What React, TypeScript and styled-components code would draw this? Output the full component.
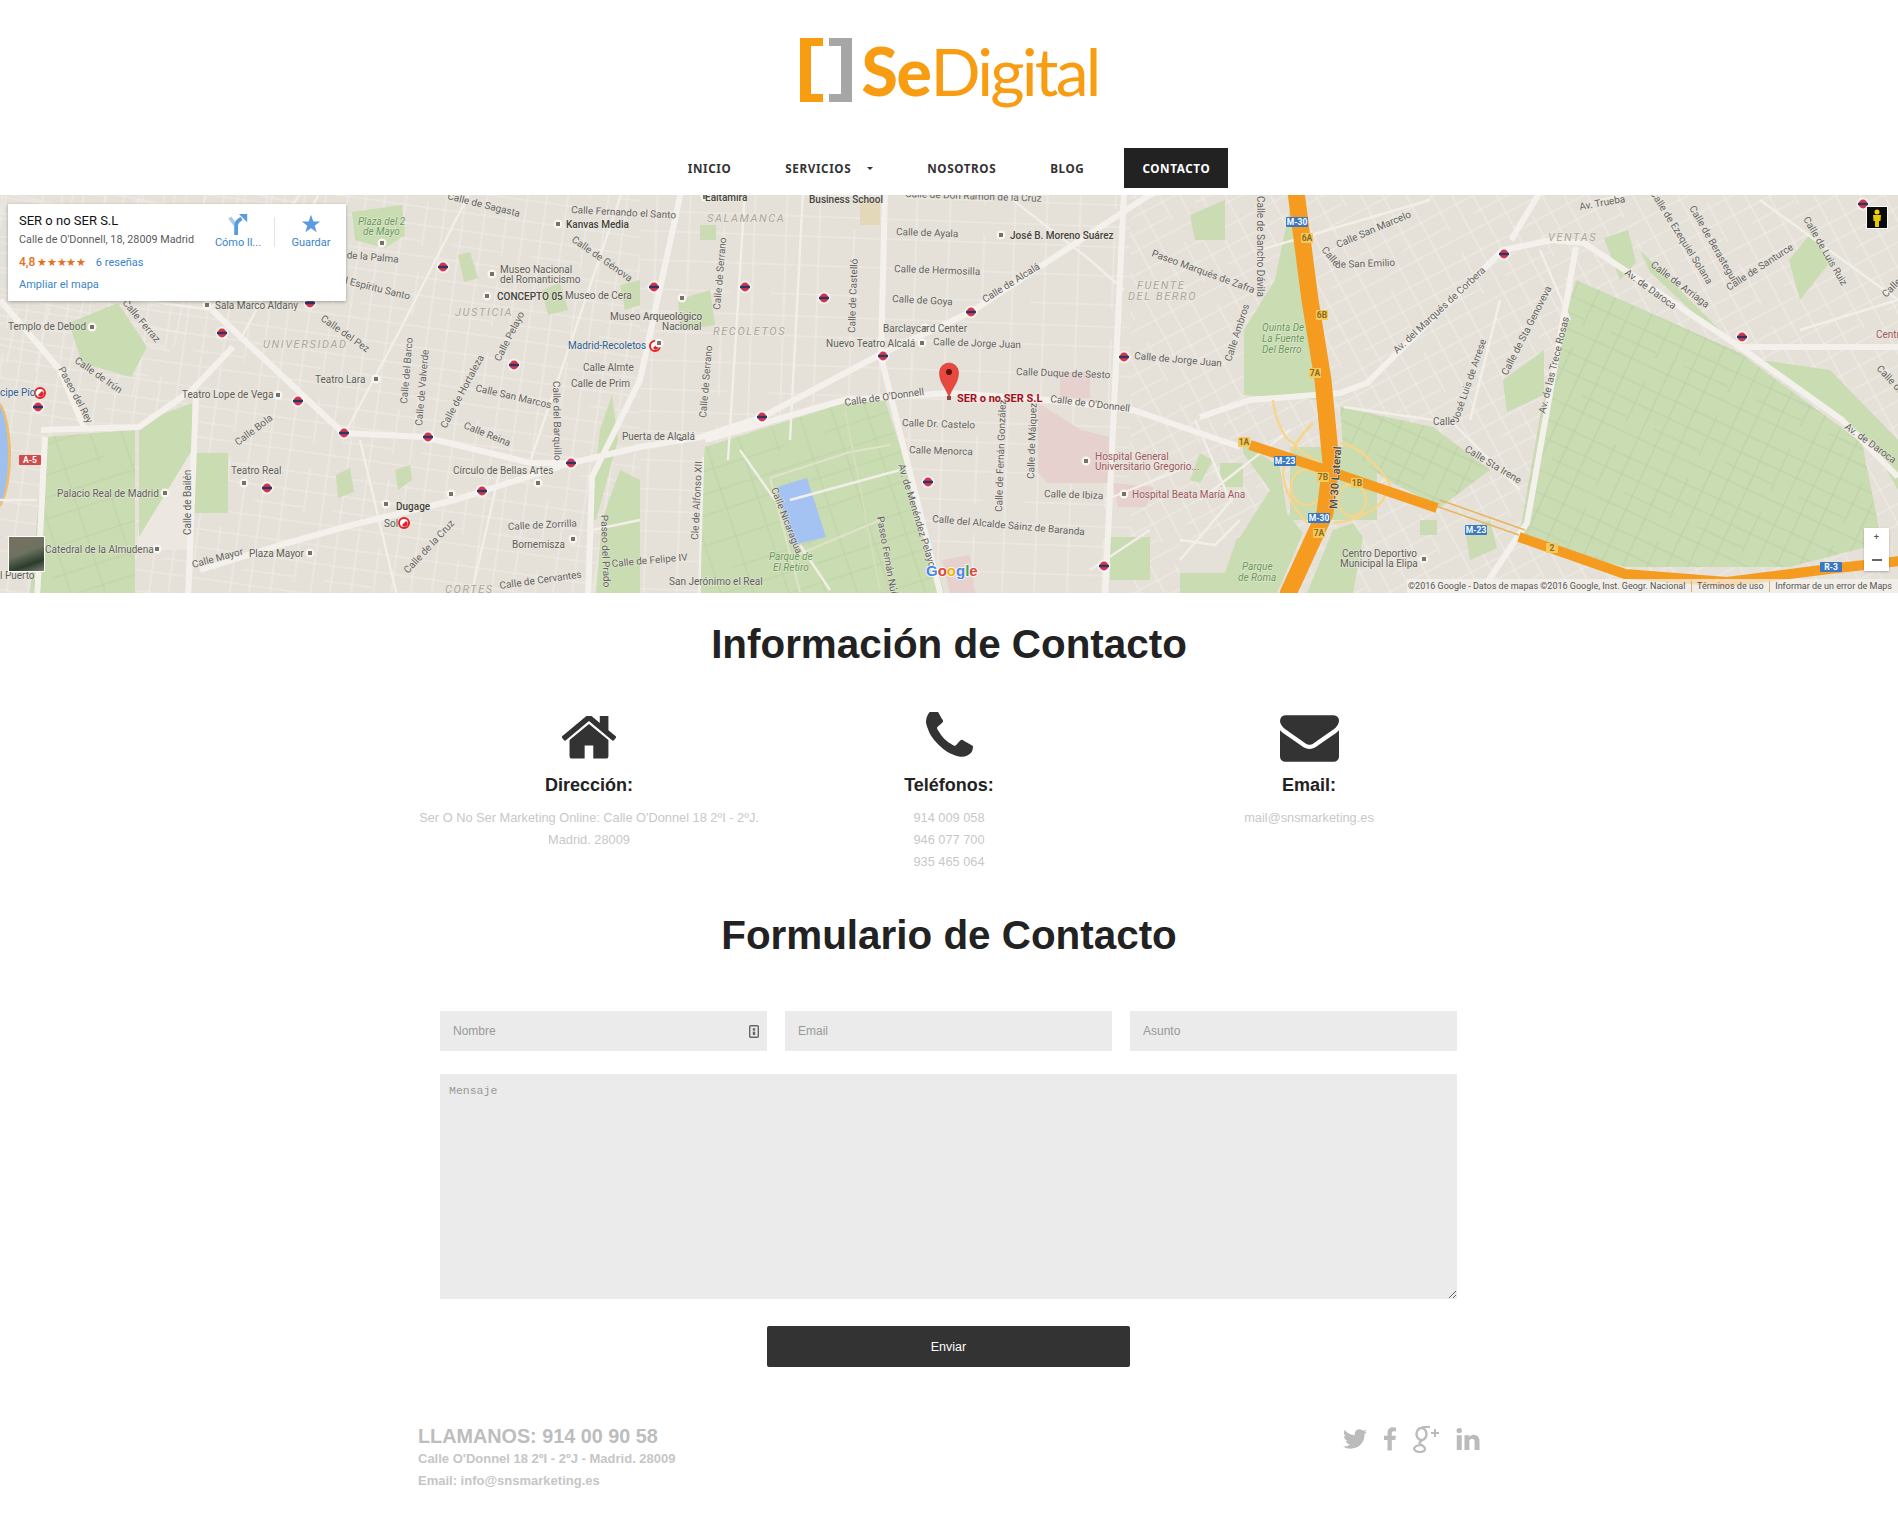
import React from "react";
import styled, { createGlobalStyle } from "styled-components";

const Global = createGlobalStyle`
  html, body { margin: 0; padding: 0; background: #fff; }
  body { font-family: "Liberation Sans", Arial, sans-serif; color: #222; }
  * { box-sizing: border-box; }
`;

const Page = styled.div`
  width: 1898px;
  height: 1517px;
  overflow: hidden;
`;

const Header = styled.header`
  height: 195px;
  padding-top: 37px;
  display: flex;
  flex-direction: column;
  align-items: center;
`;

const Logo = styled.div`
  height: 74px;
  display: flex;
  align-items: flex-start;
  gap: 10px;
`;

const LogoWord = styled.div`
  font-family: "Lato", sans-serif;
  font-size: 66px;
  line-height: 68px;
  color: #f89c12;
  letter-spacing: -2.8px;
  white-space: nowrap;
  b { font-weight: 900; letter-spacing: -1.4px; }
`;

const Nav = styled.nav`
  margin-top: 37px;
  height: 40px;
  display: flex;
  align-items: stretch;
  gap: 18px;
`;

const NavItem = styled.a<{ $active?: boolean }>`
  display: flex;
  align-items: center;
  gap: 16px;
  padding: 0 18px;
  margin-left: ${(p) => (p.$active ? "4px" : "0")};
  font-family: "Noto Sans", sans-serif;
  font-size: 11.7px;
  font-weight: 700;
  letter-spacing: 0.6px;
  color: ${(p) => (p.$active ? "#fff" : "#333")};
  background: ${(p) => (p.$active ? "#222" : "transparent")};
`;

const Caret = styled.span`
  width: 0;
  height: 0;
  border-left: 3px solid transparent;
  border-right: 3px solid transparent;
  border-top: 3px solid #333;
`;

const MapFrame = styled.section`
  position: relative;
  height: 398px;
  overflow: hidden;
  background: #e5e0d8;
`;

const MapSvg = styled.svg`
  display: block;
  width: 1898px;
  height: 398px;
`;

const MapText = styled.text<{ $k: string }>`
  font-family: Roboto, sans-serif;
  font-size: ${(p) => (p.$k === "pin" || p.$k === "area" || p.$k === "big" ? "11px" : "10px")};
  font-weight: ${(p) => (p.$k === "pin" ? 700 : p.$k === "bold" || p.$k === "big" ? 500 : 400)};
  font-style: ${(p) => (p.$k === "area" || p.$k === "park" ? "italic" : "normal")};
  letter-spacing: ${(p) => (p.$k === "area" ? "1.6px" : "0")};
  fill: ${(p) =>
    ({ st: "#63635f", poi: "#605f5b", bold: "#454440", big: "#4c4b47", area: "#aca69b", park: "#659a55", blue: "#2f5f96", pink: "#9c5a62", pin: "#a3101c" } as Record<string, string>)[p.$k]};
  paint-order: stroke;
  stroke: rgba(240, 236, 228, 0.6);
  stroke-width: 1.4px;
`;

const ShieldText = styled.text`
  font-family: Roboto, sans-serif;
  font-size: 8.5px;
  font-weight: 700;
  text-anchor: middle;
`;

const GoogleMark = styled.text`
  font-family: "Liberation Sans", sans-serif;
  font-size: 15px;
  font-weight: 700;
  paint-order: stroke;
  stroke: rgba(255, 255, 255, 0.7);
  stroke-width: 2px;
`;

const InfoCard = styled.div`
  position: absolute;
  left: 8px;
  top: 9px;
  width: 338px;
  height: 97px;
  padding: 9px 11px;
  background: #fff;
  box-shadow: 0 1px 3px rgba(0, 0, 0, 0.3);
  font-family: Roboto, sans-serif;
  display: flex;
  justify-content: space-between;
`;

const CardInfo = styled.div`
  display: flex;
  flex-direction: column;
`;

const CardTitle = styled.div`
  font-size: 13px;
  line-height: 16px;
  font-weight: 400;
  color: #111;
`;

const CardAddress = styled.div`
  margin-top: 3px;
  font-size: 10.8px;
  line-height: 15px;
  color: #5b5b5b;
`;

const RatingRow = styled.div`
  margin-top: 8px;
  height: 17px;
  display: flex;
  align-items: center;
  font-size: 12px;
  color: #e7711b;
  font-weight: 500;
`;

const Stars = styled.span`
  margin-left: 2px;
  font-size: 11px;
  letter-spacing: -0.3px;
`;

const BlueLink = styled.a`
  font-size: 11px;
  color: #3a84c9;
  font-weight: 400;
`;

const ReviewLink = styled(BlueLink)`
  margin-left: 10px;
`;

const MapLink = styled(BlueLink)`
  margin-top: 9px;
  line-height: 14px;
`;

const CardActions = styled.div`
  display: flex;
  align-items: flex-start;
  margin-right: -4px;
`;

const CardAction = styled.div`
  width: 56px;
  display: flex;
  flex-direction: column;
  align-items: center;
  font-size: 11px;
  color: #3a84c9;
  gap: 1px;
`;

const CardDivider = styled.div`
  width: 1px;
  height: 30px;
  margin: 4px 8px 0;
  background: #e4e4e4;
`;

const Pegman = styled.div`
  position: absolute;
  left: 1866px;
  top: 11px;
  width: 22px;
  height: 23px;
  background: #0b0b0b;
  border: 1px solid #fff;
  display: flex;
  align-items: center;
  justify-content: center;
`;

const Thumb = styled.div`
  position: absolute;
  left: 8px;
  top: 341px;
  width: 37px;
  height: 36px;
  border: 1px solid #fff;
  background: linear-gradient(160deg, #77705f 0%, #6e7261 45%, #2b3c2b 75%, #7c7d70 100%);
`;

const ZoomControl = styled.div`
  position: absolute;
  left: 1864px;
  top: 333px;
  width: 25px;
  height: 43px;
  background: #fff;
  box-shadow: 0 1px 2px rgba(0, 0, 0, 0.25);
  display: flex;
  flex-direction: column;
  align-items: center;
  justify-content: space-between;
  padding: 5px 0 10px;
  color: #555;
  font-family: "Liberation Sans", sans-serif;
  font-weight: 700;
`;

const ZoomPlus = styled.span`
  font-size: 9px;
  line-height: 9px;
`;

const ZoomMinus = styled.span`
  width: 10px;
  height: 2px;
  background: #666;
`;

const Attribution = styled.div`
  position: absolute;
  right: 0;
  bottom: 0;
  width: 491px;
  height: 14px;
  padding: 0 6px 0 1px;
  background: rgba(245, 243, 238, 0.72);
  display: flex;
  align-items: center;
  justify-content: space-between;
  font-family: Roboto, sans-serif;
  font-size: 9px;
  color: #555;
  white-space: nowrap;
`;

const AttributionSep = styled.span`
  width: 1px;
  height: 11px;
  background: #d8b070;
`;

const Content = styled.main`
  display: flex;
  flex-direction: column;
  align-items: center;
`;

const Heading = styled.h2<{ $top: number }>`
  margin: ${(p) => p.$top}px 0 0;
  font-size: 40.4px;
  line-height: 48px;
  font-weight: 700;
  color: #222;
  text-align: center;
`;

const InfoGrid = styled.div`
  margin-top: 38px;
  width: 1080px;
  height: 205px;
  display: grid;
  grid-template-columns: repeat(3, 360px);
`;

const InfoCol = styled.div`
  padding: 0 10px;
  text-align: center;
`;

const IconSlot = styled.div`
  height: 53px;
  display: flex;
  align-items: flex-end;
  justify-content: center;
  color: #333;
`;

const EnvelopeIcon = styled.svg`
  margin-bottom: -3px;
`;

const InfoTitle = styled.h4`
  margin: 14px 0 10px;
  font-size: 18px;
  line-height: 24px;
  font-weight: 700;
  color: #222;
`;

const InfoText = styled.p`
  margin: 0;
  font-size: 12.8px;
  line-height: 22px;
  color: #c8c8c8;
`;

const Form = styled.form`
  margin-top: 52px;
  margin-right: 1px;
  width: 1017px;
  display: flex;
  flex-direction: column;
  align-items: center;
`;

const FieldRow = styled.div`
  width: 100%;
  display: grid;
  grid-template-columns: repeat(3, 327px);
  column-gap: 18px;
`;

const FieldWrap = styled.div`
  position: relative;
`;

const Field = styled.input`
  display: block;
  width: 100%;
  height: 40px;
  padding: 0 13px;
  border: 0;
  border-radius: 0;
  background: #ebebeb;
  font-family: "Liberation Sans", sans-serif;
  font-size: 12px;
  outline: 0;
  &::placeholder { color: #999; opacity: 1; }
`;

const FieldBadge = styled.svg`
  position: absolute;
  right: 8px;
  top: 14px;
`;

const Message = styled.textarea`
  display: block;
  margin-top: 23px;
  width: 100%;
  height: 225px;
  padding: 10px 9px;
  border: 0;
  border-radius: 0;
  background: #ebebeb;
  font-family: "Liberation Mono", monospace;
  font-size: 11.5px;
  outline: 0;
  &::placeholder { color: #999; opacity: 1; }
`;

const Submit = styled.button`
  margin-top: 27px;
  width: 363px;
  height: 41px;
  border: 0;
  border-radius: 2px;
  background: #333;
  color: #fff;
  font-family: "Liberation Sans", sans-serif;
  font-size: 12.5px;
`;

const Footer = styled.footer`
  margin-top: 58px;
  width: 1062px;
  display: flex;
  justify-content: space-between;
  align-items: flex-start;
`;

const FooterLead = styled.div`
  font-size: 19.8px;
  line-height: 23px;
  font-weight: 700;
  color: #bdbdbd;
`;

const FooterLine = styled.div`
  font-size: 13px;
  line-height: 22px;
  font-weight: 700;
  color: #c6c6c6;
`;

const Social = styled.div`
  display: flex;
  align-items: center;
  height: 28px;
  gap: 17px;
  color: #bbb;
`;

type L = [string, number, number, number, string];
const labels: L[] = [
  ["Plaza del 2", 358, 225, 0, "park"], ["de Mayo", 363, 235, 0, "park"],
  ["Calle de Sagasta", 447, 199, 14, "st"], ["Calle Fernando el Santo", 571, 213, 3, "st"],
  ["Kanvas Media", 566, 228, 0, "bold"], ["Calle de Génova", 571, 241, 35, "st"],
  ["Calle de la Palma", 322, 256, 5, "st"], ["Calle del Espíritu Santo", 310, 275, 14, "st"],
  ["Museo Nacional", 500, 273, 0, "poi"], ["del Romanticismo", 500, 283, 0, "poi"],
  ["CONCEPTO 05", 497, 300, 0, "bold"], ["Museo de Cera", 565, 299, 0, "poi"],
  ["Museo Arqueológico", 610, 320, 0, "poi"], ["JUSTICIA", 455, 316, 0, "area"],
  ["UNIVERSIDAD", 263, 348, 0, "area"], ["Sala Marco Aldany", 215, 309, 0, "poi"],
  ["Templo de Debod", 8, 330, 0, "poi"], ["Calle del Pez", 320, 320, 35, "st"],
  ["Calle de Irún", 74, 362, 35, "st"], ["Paseo del Rey", 58, 369, 62, "st"],
  ["Calle Ferraz", 122, 303, 50, "st"], ["Teatro Lara", 315, 383, 0, "poi"],
  ["Teatro Lope de Vega", 182, 398, 0, "poi"], ["Calle del Barco", 407, 404, -85, "st"],
  ["Calle de Valverde", 422, 426, -85, "st"], ["Calle de Hortaleza", 446, 429, -62, "st"],
  ["Calle Pelayo", 500, 362, -63, "st"], ["Calle San Marcos", 475, 391, 13, "st"],
  ["Calle Reina", 463, 428, 22, "st"], ["Calle del Barquillo", 553, 381, 89, "st"],
  ["Calle Almte", 583, 371, 0, "st"], ["Calle de Prim", 571, 387, 0, "st"],
  ["Madrid-Recoletos", 568, 349, 0, "blue"], ["Calle Bola", 238, 446, -37, "st"],
  ["cipe Pío", 0, 396, 0, "blue"], ["Teatro Real", 231, 474, 0, "poi"],
  ["Palacio Real de Madrid", 57, 497, 0, "poi"], ["Círculo de Bellas Artes", 453, 474, 0, "poi"],
  ["Dugage", 396, 510, 0, "bold"], ["Sol", 384, 527, 0, "poi"],
  ["Calle de Zorrilla", 508, 530, -3, "st"], ["Bornemisza", 512, 548, 0, "poi"],
  ["Calle de Bailén", 191, 535, -90, "st"], ["Catedral de la Almudena", 45, 553, 0, "poi"],
  ["Calle Mayor", 193, 568, -15, "st"], ["Plaza Mayor", 249, 557, 0, "poi"],
  ["Calle de la Cruz", 408, 574, -47, "st"], ["Calle de Cervantes", 500, 589, -8, "st"],
  ["CORTES", 445, 593, 0, "area"], ["Paseo del Prado", 601, 515, 88, "st"],
  ["l Puerto", 0, 579, 0, "poi"],
  ["Ealtamira", 705, 201, 0, "bold"], ["Business School", 809, 203, 0, "bold"],
  ["Calle de Don Ramón de la Cruz", 905, 197, 2, "st"], ["SALAMANCA", 707, 222, 0, "area"],
  ["Calle de Ayala", 896, 235, 2, "st"], ["José B. Moreno Suárez", 1010, 239, 0, "bold"],
  ["Calle de Serrano", 720, 310, -85, "st"], ["Calle de Castelló", 855, 333, -88, "st"],
  ["Calle de Hermosilla", 894, 272, 2, "st"], ["Calle de Goya", 892, 302, 3, "st"],
  ["Calle de Alcalá", 985, 303, -32, "st"], ["Paseo Marqués de Zafra", 1151, 256, 20, "st"],
  ["FUENTE", 1137, 289, 0, "area"], ["DEL BERRO", 1128, 300, 0, "area"],
  ["Calle Ambros", 1231, 362, -72, "st"], ["Calle de Sancho Dávila", 1257, 196, 90, "st"],
  ["Arqueológico", 643, 320, 0, "poi"], ["Nacional", 662, 330, 0, "poi"],
  ["RECOLETOS", 713, 335, 0, "area"], ["Barclaycard Center", 883, 332, 0, "poi"],
  ["Nuevo Teatro Alcalá", 826, 347, 0, "poi"], ["Calle de Jorge Juan", 933, 345, 2, "st"],
  ["Calle de Jorge Juan", 1134, 359, 5, "st"], ["Calle Duque de Sesto", 1016, 375, 2, "st"],
  ["Calle de O'Donnell", 845, 406, -8, "st"], ["Calle de O'Donnell", 1050, 402, 7, "st"],
  ["SER o no SER S.L", 957, 402, 0, "pin"], ["Calle Dr. Castelo", 902, 426, 2, "st"],
  ["Calle Menorca", 909, 453, 2, "st"], ["Calle de Serrano", 706, 418, -85, "st"],
  ["Puerta de Alcalá", 622, 440, 0, "poi"], ["Calle de Fernán González", 1002, 512, -88, "st"],
  ["Calle de Máiquez", 1034, 479, -88, "st"], ["Hospital General", 1095, 460, 0, "pink"],
  ["Universitario Gregorio...", 1095, 470, 0, "pink"], ["Calle de Ibiza", 1044, 497, 2, "st"],
  ["Hospital Beata María Ana", 1132, 498, 0, "pink"], ["Calle del Alcalde Sáinz de Baranda", 932, 522, 5, "st"],
  ["Av. de Menéndez Pelayo", 898, 465, 73, "st"], ["Paseo Fernán Núñez", 877, 517, 80, "st"],
  ["Calle Nicaragua", 771, 489, 69, "st"], ["Cle de Alfonso XII", 698, 540, -87, "st"],
  ["Parque de", 769, 560, 0, "park"], ["El Retiro", 773, 571, 0, "park"],
  ["Calle de Felipe IV", 612, 567, -5, "st"], ["San Jerónimo el Real", 669, 585, 0, "poi"],
  ["Parque", 1242, 570, 0, "park"], ["de Roma", 1238, 581, 0, "park"],
  ["Calle San Marcelo", 1338, 248, -23, "st"], ["Calle", 1321, 250, 50, "st"],
  ["de San Emilio", 1335, 268, -2, "st"], ["Av. Trueba", 1580, 210, -10, "st"],
  ["VENTAS", 1548, 241, 0, "area"], ["Av. del Marqués de Corbera", 1397, 354, -43, "st"],
  ["Calle de Sta Genoveva", 1507, 376, -63, "st"], ["Av. de las Trece Rosas", 1545, 414, -76, "st"],
  ["Calle", 1433, 425, 0, "st"], ["José Luis de Arrese", 1458, 423, -71, "st"],
  ["Calle Sta Irene", 1464, 451, 31, "st"], ["Av. de Daroca", 1624, 274, 36, "st"],
  ["Calle de Arriaga", 1650, 266, 37, "st"], ["Calle de Ezequiel Solana", 1650, 193, 58, "st"],
  ["Calle de Berastegui", 1689, 208, 60, "st"], ["Calle de Santurce", 1729, 291, -33, "st"],
  ["Calle de Luis Ruiz", 1803, 219, 60, "st"], ["Av. de Daroca", 1844, 428, 36, "st"],
  ["Calle de", 1876, 369, 47, "st"], ["Calle", 1886, 298, -45, "st"], ["Centro", 1876, 338, 0, "pink"],
  ["Quinta De", 1262, 331, 0, "park"], ["La Fuente", 1262, 342, 0, "park"], ["Del Berro", 1262, 353, 0, "park"],
  ["M-30 Lateral", 1337, 509, -86, "big"], ["Centro Deportivo", 1342, 557, 0, "poi"],
  ["Municipal la Elipa", 1340, 567, 0, "poi"],
];

const metros = [
  [443, 267], [310, 303], [222, 333], [514, 365], [298, 401], [344, 433], [428, 437], [571, 463], [482, 491],
  [267, 488], [38, 407], [654, 287], [745, 287], [824, 298], [971, 312], [883, 356], [762, 417], [928, 482],
  [1124, 357], [1104, 566], [1504, 254], [1742, 337], [1863, 204],
];
const trains = [[40, 393], [404, 523], [655, 346]];
const pois = [
  [207, 305], [558, 224], [705, 197], [1001, 235], [492, 274], [487, 296], [386, 504], [451, 494], [538, 483],
  [92, 327], [165, 493], [244, 483], [376, 379], [278, 395], [925, 328], [922, 343], [1086, 461], [1124, 494],
  [681, 439], [659, 343], [682, 298], [1424, 559], [382, 243], [157, 549], [310, 553], [573, 539],
];
const shields: [number, number, string, string][] = [
  [1297, 222, "M-30", "b"], [1319, 518, "M-30", "b"], [1285, 461, "M-23", "b"], [1476, 530, "M-23", "b"],
  [1831, 567, "R-3", "b"], [30, 460, "A-5", "r"], [1307, 238, "6A", "y"], [1322, 315, "6B", "y"],
  [1315, 373, "7A", "y"], [1323, 477, "7B", "y"], [1357, 483, "1B", "y"], [1552, 548, "2", "y"],
  [1244, 442, "1A", "y"], [1319, 533, "7A", "y"],
];
const parks = [
  "705,447 844,403 885,400 901,450 930,540 944,593 701,593 701,490",
  "1576,280 1740,353 1862,443 1882,543 1789,567 1625,567 1519,537 1540,417",
  "1503,380 1544,350 1544,395 1507,412",
  "1340,407 1433,427 1490,470 1440,507 1387,480 1343,447",
  "1244,395 1244,330 1275,280 1292,198 1303,198 1322,400",
  "1243,443 1280,467 1287,513 1303,533 1277,593 1180,593 1180,573 1240,537 1270,490 1243,453",
  "1290,447 1377,447 1377,520 1290,520",
  "1333,530 1353,523 1363,537 1353,593 1307,593",
  "1190,480 1200,453 1213,460 1200,483",
  "1220,463 1243,463 1243,487 1220,487",
  "1110,537 1150,537 1150,580 1110,580",
  "69,323 118,303 147,347 131,377 82,363",
  "45,437 135,430 135,593 30,593",
  "139,423 192,403 192,450 139,537",
  "192,453 228,453 228,513 192,513",
  "352,212 402,205 405,235 385,248 355,240",
  "1604,238 1628,230 1636,262 1620,280",
  "1640,250 1700,310 1735,345 1712,330 1650,272",
  "1789,260 1812,232 1830,262 1800,300",
  "1760,360 1830,370 1898,440 1898,490 1870,440",
  "600,430 612,395 618,440 596,520 590,520",
  "620,470 640,480 640,593 596,593 602,520",
  "678,300 710,290 715,325 680,330",
];
const smallParks = [
  "458,255 470,252 478,278 464,282", "542,290 560,283 568,310 548,315", "395,470 410,465 412,480 398,490",
  "336,475 350,468 354,492 338,498", "700,225 716,225 716,240 700,240", "1190,215 1225,200 1225,240 1195,240",
  "1465,530 1490,520 1497,548 1470,560", "1420,520 1437,520 1437,535 1420,535", "620,285 640,280 640,305 625,310",
];
const majorRoads = [
  "212,310 343,433 424,437 531,463 571,463 640,447 701,437 762,417 883,353 971,312 1146,197 1170,185",
  "705,440 844,400 950,393 1048,400 1133,410 1240,447",
  "681,192 640,380 592,477 588,600",
  "885,192 881,357 942,600",
  "1124,192 1105,600",
  "196,397 188,600",
  "41,430 139,427 192,390 233,347",
  "1200,417 1250,400 1340,393 1367,383 1380,370 1503,250 1552,240 1584,243 1740,347 1898,347",
  "1740,347 1842,420 1898,477",
  "1576,247 1527,523 1482,590",
  "1511,240 1540,192",
  "571,463 455,500 352,525 280,545 200,570",
  "37,600 45,437",
  "0,300 60,370 85,430",
];
const mediumRoads = [
  "803,192 790,440", "703,457 699,600", "745,192 728,460", "470,192 400,330 345,433", "622,192 530,462",
  "300,195 210,310", "140,300 212,310", "0,500 37,500", "360,440 398,600", "500,470 470,600", "640,520 592,530",
  "1000,190 1090,260 1124,290", "1200,500 1290,430", "1195,420 1230,500", "1105,500 1180,470",
  "320,192 240,340", "1600,200 1650,190", "1760,200 1898,300", "1800,330 1898,300",
  "1500,300 1470,420", "1430,200 1260,250", "1450,420 1520,490", "1344,407 1454,423", "790,500 900,470", "775,500 740,450",
  "830,590 800,545", "1540,250 1570,320", "1090,570 1150,530", "1180,560 1240,490", "1180,540 1215,545 1240,520",
];

const Gridline = ({ id, w, h, rot, color, lines }: { id: string; w: number; h: number; rot: number; color: string; lines: string }) => (
  <pattern id={id} width={w} height={h} patternUnits="userSpaceOnUse" patternTransform={`rotate(${rot})`}>
    <path d={lines} stroke={color} strokeWidth="1.1" fill="none" />
  </pattern>
);

const grid = "M0 8H130M0 37H130M0 66H90M0 88H130M14 0V100M47 0V100M82 0V70M112 0V100";
const fine = "M0 6H80M0 24H80M0 40H50M0 55H80M9 0V70M30 0V70M52 0V45M70 0V70";

function MapArt() {
  return (
    <MapSvg viewBox="0 195 1898 398">
      <defs>
        <Gridline id="gA" w={130} h={100} rot={12} color="#f0ede7" lines={grid} />
        <Gridline id="gB" w={130} h={100} rot={2} color="#f0ede7" lines={grid} />
        <Gridline id="gC" w={80} h={70} rot={-28} color="#f0ede7" lines={fine} />
        <Gridline id="gD" w={80} h={70} rot={8} color="#f0ede7" lines={fine} />
        <Gridline id="gP" w={130} h={100} rot={-18} color="#bfd2a8" lines={grid} />
        <Gridline id="gQ" w={80} h={70} rot={25} color="#bdd0a7" lines={fine} />
      </defs>
      <rect x="0" y="195" width="1898" height="398" fill="#e5e0d8" />
      <rect x="0" y="195" width="640" height="398" fill="url(#gD)" />
      <rect x="640" y="195" width="490" height="398" fill="url(#gB)" />
      <rect x="1130" y="195" width="770" height="398" fill="url(#gC)" />
      <polygon points="0,195 300,195 130,400 0,360" fill="url(#gA)" />
      <polygon points="1038,403 1081,430 1109,437 1113,483 1154,487 1146,507 1118,507 1113,483 1048,483 1038,473" fill="#e7d1cf" />
      <polygon points="1060,372 1090,372 1090,398 1060,398" fill="#e7d1cf" />
      <polygon points="942,560 970,555 975,593 950,593" fill="#e7d1cf" />
      <polygon points="860,200 880,200 880,225 860,225" fill="#e3d8b8" />
      <polygon points="139,453 192,453 192,550 139,550" fill="#ece8e1" />
      {smallParks.map((p) => <polygon key={p} points={p} fill="#cbdcb4" />)}
      {parks.map((p) => <polygon key={p} points={p} fill="#c9dcb2" />)}
      <polygon points="1576,280 1740,353 1862,443 1882,543 1789,567 1625,567 1519,537 1540,417" fill="url(#gQ)" />
      <polygon points="705,447 844,403 885,400 901,450 930,540 944,593 701,593 701,490" fill="url(#gP)" />
      <polygon points="45,437 135,430 135,593 30,593" fill="url(#gP)" />
      <polygon points="1340,407 1433,427 1490,470 1440,507 1387,480 1343,447" fill="url(#gQ)" />
      <polygon points="1180,540 1237,538 1225,573 1180,573" fill="#e5e0d8" />
      <polyline points="770,478 850,452 890,445" fill="none" stroke="#e0e3c8" strokeWidth="2" />
      <polyline points="770,478 800,592" fill="none" stroke="#e0e3c8" strokeWidth="2" />
      <polyline points="795,556 880,520" fill="none" stroke="#e0e3c8" strokeWidth="2" />
      <polyline points="845,410 880,590" fill="none" stroke="#d8dfc0" strokeWidth="1.5" />
      <polygon points="777,487 807,478 826,537 793,545" fill="#a4c3f2" />
      <ellipse cx="-6" cy="455" rx="17" ry="56" fill="#e9bf72" />
      <ellipse cx="-6" cy="455" rx="14" ry="54" fill="#9fc0ef" />
      {mediumRoads.map((p) => <polyline key={p} points={p} fill="none" stroke="#f2efe9" strokeWidth="2.4" />)}
      {majorRoads.map((p) => <polyline key={p} points={p} fill="none" stroke="#f4f1ec" strokeWidth="6" strokeLinejoin="round" />)}
      <g fill="none" stroke="#f7d58a" strokeWidth="2.4">
        <path d="M1273 400C1275 420 1285 440 1293 443C1300 452 1310 458 1320 463" />
        <path d="M1313 423C1300 435 1290 450 1283 470C1283 490 1295 510 1307 523" />
        <ellipse cx="1307" cy="487" rx="16" ry="18" />
        <ellipse cx="1352" cy="500" rx="14" ry="16" />
        <path d="M1340 443C1350 445 1360 450 1367 457C1380 470 1390 480 1390 487C1385 500 1375 510 1367 513C1355 520 1345 522 1333 523" />
        <path d="M1433 505L1519 535" strokeWidth="1.5" stroke="#e8b45c" />
        <path d="M1440 500L1525 530" strokeWidth="1.5" stroke="#e8b45c" />
      </g>
      <g fill="none" stroke="#f49b20" strokeLinejoin="round">
        <path d="M1296 192L1310 300L1323 380L1331 463L1325 513L1287 596" strokeWidth="17" />
        <path d="M1250 445L1320 468L1437 508" strokeWidth="10" />
        <path d="M1519 537L1625 574L1727 582L1829 569L1900 561" strokeWidth="10" />
      </g>
      <g>
        {metros.map(([x, y]) => (
          <g key={`${x}-${y}`}>
            <circle cx={x} cy={y} r="6.5" fill="#fff" fillOpacity="0.55" />
            <circle cx={x} cy={y} r="4.4" fill="#d5354c" />
            <rect x={x - 5} y={y - 1.2} width="10" height="2.4" fill="#2c3566" />
          </g>
        ))}
        {trains.map(([x, y]) => (
          <g key={`${x}-${y}`}>
            <circle cx={x} cy={y} r="5" fill="#fff" stroke="#e0242c" strokeWidth="2" />
            <path d={`M${x - 2} ${y + 2}A3 3 0 1 0 ${x + 2} ${y - 2}`} fill="#e0242c" />
          </g>
        ))}
        {pois.map(([x, y]) => (
          <g key={`${x}-${y}`}>
            <circle cx={x} cy={y} r="4.5" fill="#f8f6f1" />
            <rect x={x - 2} y={y - 2} width="4" height="4" fill="#77736c" />
          </g>
        ))}
      </g>
      {shields.map(([x, y, t, c]) => (
        <g key={`${x}-${y}`}>
          <rect
            x={x - (c === "y" ? 6 : 11)}
            y={y - 5}
            width={c === "y" ? 12 : 22}
            height={10}
            rx="1"
            fill={c === "b" ? "#3b78c2" : c === "r" ? "#d04b4b" : "#f5c95c"}
          />
          <ShieldText x={x} y={y + 3} fill={c === "y" ? "#8a6a20" : "#fff"}>{t}</ShieldText>
        </g>
      ))}
      {labels.map(([t, x, y, r, k], i) => (
        <MapText key={i} $k={k} x={x} y={y} transform={r ? `rotate(${r} ${x} ${y})` : undefined}>{t}</MapText>
      ))}
      <GoogleMark x="926" y="576">
        <tspan fill="#4a86e8">G</tspan><tspan fill="#e0463a">o</tspan><tspan fill="#f0b400">o</tspan>
        <tspan fill="#4a86e8">g</tspan><tspan fill="#3aa655">l</tspan><tspan fill="#e0463a">e</tspan>
      </GoogleMark>
      <path d="M949 398C947 388 939.5 384 939.5 372.5A9.5 9.5 0 0 1 958.5 372.5C958.5 384 951 388 949 398Z" fill="#e9483f" stroke="#c43a32" strokeWidth="0.6" />
      <circle cx="949" cy="372" r="3" fill="#551410" />
      <rect x="947" y="396" width="4" height="4" fill="#8a4a44" />
    </MapSvg>
  );
}

export default function App() {
  return (
    <Page>
      <Global />
      <Header>
        <Logo>
          <svg width="52" height="65" viewBox="0 0 52 65" style={{ marginTop: 1 }}>
            <path d="M0 0H23V8H11V56H23V64H0Z" fill="#f89c12" />
            <path d="M29 0H52V64H29V56H41V8H29Z" fill="#a6a6a6" />
          </svg>
          <LogoWord><b>Se</b>Digital</LogoWord>
        </Logo>
        <Nav>
          <NavItem>INICIO</NavItem>
          <NavItem>SERVICIOS<Caret /></NavItem>
          <NavItem>NOSOTROS</NavItem>
          <NavItem>BLOG</NavItem>
          <NavItem $active>CONTACTO</NavItem>
        </Nav>
      </Header>

      <MapFrame>
        <MapArt />
        <InfoCard>
          <CardInfo>
            <CardTitle>SER o no SER S.L</CardTitle>
            <CardAddress>Calle de O'Donnell, 18, 28009 Madrid</CardAddress>
            <RatingRow>4,8<Stars>★★★★★</Stars><ReviewLink>6 reseñas</ReviewLink></RatingRow>
            <MapLink>Ampliar el mapa</MapLink>
          </CardInfo>
          <CardActions>
            <CardAction>
              <svg width="20" height="22" viewBox="0 0 20 24">
                <path d="M8 24V14L1 5" fill="none" stroke="#a9c9e8" strokeWidth="4" />
                <path d="M8 24V14C8 10 10 8 14 6" fill="none" stroke="#5a9be0" strokeWidth="4" />
                <path d="M11 1H20V10Z" fill="#5a9be0" />
              </svg>
              Cómo ll...
            </CardAction>
            <CardDivider />
            <CardAction>
              <svg width="20" height="22" viewBox="0 0 20 24">
                <path d="M10 2L12.6 9.2H20L14 13.8L16.2 21L10 16.6L3.8 21L6 13.8L0 9.2H7.4Z" fill="#5a9be0" />
              </svg>
              Guardar
            </CardAction>
          </CardActions>
        </InfoCard>
        <Pegman>
          <svg width="12" height="18" viewBox="0 0 12 18">
            <circle cx="6" cy="3" r="2.5" fill="#f5d400" />
            <path d="M2 6H10L9.5 12H8V18H4V12H2.5Z" fill="#e8c800" />
          </svg>
        </Pegman>
        <Thumb />
        <ZoomControl><ZoomPlus>+</ZoomPlus><ZoomMinus /></ZoomControl>
        <Attribution>
          <span>©2016 Google - Datos de mapas ©2016 Google, Inst. Geogr. Nacional</span>
          <AttributionSep />
          <span>Términos de uso</span>
          <AttributionSep />
          <span>Informar de un error de Maps</span>
        </Attribution>
      </MapFrame>

      <Content>
        <Heading $top={27}>Información de Contacto</Heading>
        <InfoGrid>
          <InfoCol>
            <IconSlot>
              <svg width="54" height="43" viewBox="97 288 1600 1250" fill="currentColor">
                <path d="M1472 992v480q0 26-19 45t-45 19h-384v-384h-256v384h-384q-26 0-45-19t-19-45v-480q0-1 .5-3t.5-3l575-474 575 474q1 2 1 6zm223-69l-62 74q-8 9-21 11h-3q-13 0-21-7l-692-577-692 577q-12 8-24 7-13-2-21-11l-62-74q-8-10-7-23.5t11-21.5l719-599q32-26 76-26t76 26l244 204v-195q0-14 9-23t23-9h192q14 0 23 9t9 23v408l219 182q10 8 11 21.5t-7 23.5z" />
              </svg>
            </IconSlot>
            <InfoTitle>Dirección:</InfoTitle>
            <InfoText>Ser O No Ser Marketing Online: Calle O'Donnel 18 2ºI - 2ºJ. Madrid. 28009</InfoText>
          </InfoCol>
          <InfoCol>
            <IconSlot>
              <svg width="47" height="47" viewBox="192 192 1408 1408" fill="currentColor">
                <path d="M1600 1240q0 27-10 70.5t-21 68.5q-21 50-122 106-94 51-186 51-27 0-53-3.5t-57.5-12.5-47-14.5-55.5-20.5-49-18q-98-35-175-83-127-79-264-216t-216-264q-48-77-83-175-3-9-18-49t-20.5-55.5-14.5-47-12.5-57.5-3.5-53q0-92 51-186 56-101 106-122 25-11 68.5-21t70.5-10q14 0 21 3 18 6 53 76 11 19 30 54t35 63.5 31 53.5q3 4 17.5 25t21.5 35.5 7 28.5q0 20-28.5 50t-62 55-62 53-28.5 46q0 9 5 22.5t8.5 20.5 14 24 11.5 19q76 137 174 235t235 174q2 1 19 11.5t24 14 20.5 8.5 22.5 5q18 0 46-28.5t53-62 55-62 50-28.5q14 0 28.5 7t35.5 21.5 25 17.5q25 15 53.5 31t63.5 35 54 30q70 35 76 53 3 7 3 21z" />
              </svg>
            </IconSlot>
            <InfoTitle>Teléfonos:</InfoTitle>
            <InfoText>914 009 058<br />946 077 700<br />935 465 064</InfoText>
          </InfoCol>
          <InfoCol>
            <IconSlot>
              <EnvelopeIcon width="59" height="47" viewBox="0 256 1792 1408" fill="currentColor">
                <path d="M1792 710v794q0 66-47 113t-113 47h-1472q-66 0-113-47t-47-113v-794q44 49 101 87 362 246 497 345 57 42 92.5 65.5t94.5 48 110 24.5h2q51 0 110-24.5t94.5-48 92.5-65.5q170-123 498-345 57-39 100-87zm0-294q0 79-49 151t-122 123q-376 261-468 325-10 7-42.5 30.5t-54 38-52 32.5-57.5 27-50 9h-2q-23 0-50-9t-57.5-27-52-32.5-54-38-42.5-30.5q-91-64-262-182.5t-205-142.5q-62-42-117-115.5t-55-136.5q0-78 41.5-130t118.5-52h1472q65 0 112.5 47t47.5 113z" />
              </EnvelopeIcon>
            </IconSlot>
            <InfoTitle>Email:</InfoTitle>
            <InfoText>mail@snsmarketing.es</InfoText>
          </InfoCol>
        </InfoGrid>

        <Heading $top={0}>Formulario de Contacto</Heading>

        <Form>
          <FieldRow>
            <FieldWrap>
              <Field placeholder="Nombre" />
              <FieldBadge width="10" height="13" viewBox="0 0 10 13">
                <rect x="0.7" y="0.7" width="8.6" height="11.6" rx="1" fill="none" stroke="#666" strokeWidth="1.4" />
                <circle cx="5" cy="4.4" r="1.3" fill="#666" />
                <rect x="3.8" y="6.6" width="2.4" height="3.4" fill="#666" />
              </FieldBadge>
            </FieldWrap>
            <FieldWrap><Field placeholder="Email" /></FieldWrap>
            <FieldWrap><Field placeholder="Asunto" /></FieldWrap>
          </FieldRow>
          <Message placeholder="Mensaje" />
          <Submit type="button">Enviar</Submit>
        </Form>

        <Footer>
          <div>
            <FooterLead>LLAMANOS: 914 00 90 58</FooterLead>
            <FooterLine>Calle O'Donnel 18 2ºI - 2ºJ - Madrid. 28009</FooterLine>
            <FooterLine>Email: info@snsmarketing.es</FooterLine>
          </div>
          <Social>
            <svg width="24" height="20" viewBox="110 280 1574 1240" fill="currentColor">
              <path d="M1684 408q-67 98-162 167 1 14 1 42 0 130-38 259.5t-115.5 248.5-184.5 210.5-258 146-323 54.5q-271 0-496-145 35 4 78 4 225 0 401-138-105-2-188-64.5t-114-159.5q33 5 61 5 43 0 85-11-112-23-185.5-111.5t-73.5-205.5v-4q68 38 146 41-66-44-105-115t-39-154q0-88 44-163 121 149 294.5 238.5t371.5 99.5q-8-38-8-74 0-134 94.5-228.5t228.5-94.5q140 0 236 102 109-21 205-78-37 115-142 178 93-10 186-50z" />
            </svg>
            <svg width="12" height="24" viewBox="479 12 864 1652" fill="currentColor">
              <path d="M1343 12v264h-157q-86 0-116 36t-30 108v189h293l-39 296h-254v759h-306v-759h-255v-296h255v-218q0-186 104-288.5t277-102.5q147 0 228 12z" />
            </svg>
            <svg width="26" height="27" viewBox="0 0 26 27" fill="none" stroke="currentColor">
              <ellipse cx="8.5" cy="8" rx="5" ry="6" strokeWidth="2.4" />
              <path d="M9 1H17" strokeWidth="2" />
              <path d="M9 15C4 17 7 18 10 20C13 22 13 26 7 26C2 26 0 23 2 21C4 19 7 19 10 19" strokeWidth="2.2" />
              <path d="M22 3V11M18 7H26" strokeWidth="2" />
            </svg>
            <svg width="24" height="22" viewBox="128 148 1536 1468" fill="currentColor">
              <path d="M477 625v991h-330v-991h330zm21-306q1 73-50.5 122t-135.5 49h-2q-82 0-132-49t-50-122q0-74 51.5-122.5t134.5-48.5 133 48.5 51 122.5zm1166 729v568h-329v-530q0-105-40.5-164.5t-126.5-59.5q-63 0-105.5 34.5t-63.5 85.5q-11 30-11 81v553h-329q2-399 2-647t-1-296l-1-48h329v144h-2q20-32 41-56t56.5-52 87-43.5 114.5-15.5q171 0 275 113.5t104 332.5z" />
            </svg>
          </Social>
        </Footer>
      </Content>
    </Page>
  );
}
